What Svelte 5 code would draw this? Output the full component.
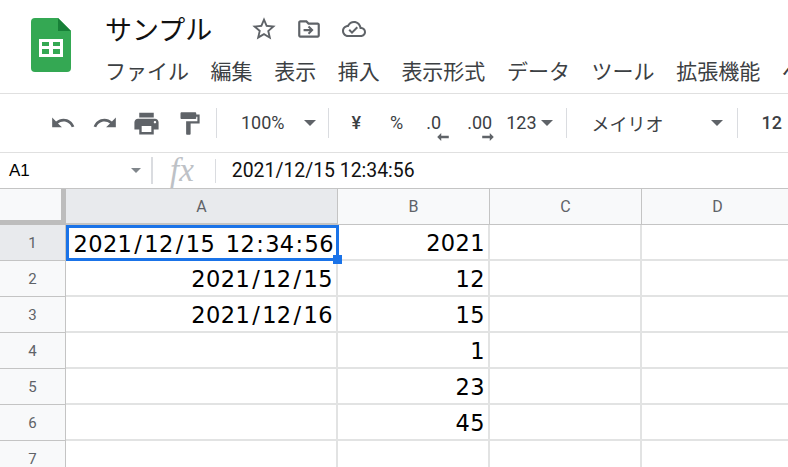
<script>
  const menus = ['ファイル', '編集', '表示', '挿入', '表示形式', 'データ', 'ツール', '拡張機能', 'ヘルプ'];
  const columns = ['A', 'B', 'C', 'D'];
  const rows = [
    { a: '2021/12/15 12:34:56', b: '2021' },
    { a: '2021/12/15', b: '12' },
    { a: '2021/12/16', b: '15' },
    { a: '', b: '1' },
    { a: '', b: '23' },
    { a: '', b: '45' },
    { a: '', b: '' }
  ];
</script>

<div class="page">
  <header class="top">
    <svg class="logo" width="40" height="54" viewBox="0 0 40 54">
      <path d="M4 0h23l13 13v37a4 4 0 0 1-4 4H4a4 4 0 0 1-4-4V4a4 4 0 0 1 4-4z" fill="#34a853" />
      <path d="M27 0l13 13H27z" fill="#188038" />
      <path d="M8 21h24v18H8zM11 24v4h7v-4zM22 24v4h7v-4zM11 31v5h7v-5zM22 31v5h7v-5z" fill="#fff" fill-rule="evenodd" />
    </svg>
    <div class="titles">
      <div class="title-row">
        <span class="doc-name">サンプル</span>
        <div class="doc-icons">
          <svg width="28" height="28" viewBox="0 0 24 24"><path d="M22 9.24l-7.19-.62L12 2 9.19 8.63 2 9.24l5.46 4.73L5.82 21 12 17.27 18.18 21l-1.63-7.03L22 9.24zM12 15.4l-3.76 2.27 1-4.28-3.32-2.88 4.38-.38L12 6.1l1.71 4.04 4.38.38-3.32 2.88 1 4.28L12 15.4z" /></svg>
          <svg width="26" height="26" viewBox="0 0 24 24"><path d="M20 6h-8l-2-2H4c-1.1 0-2 .9-2 2v12c0 1.1.9 2 2 2h16c1.100 0 2-.9 2-2V8c0-1.100-.9-2-2-2zm0 12H4V6h5.170l2 2H20v10z" /><path d="M12.200 9l-1.300 1.300 1.700 1.700H7v2h5.600l-1.700 1.700L12.200 17l4-4z" /></svg>
          <svg class="cloud" width="24" height="24" viewBox="0 0 24 24"><path d="M19.35 10.04C18.67 6.59 15.64 4 12 4 9.11 4 6.6 5.64 5.35 8.04 2.34 8.36 0 10.91 0 14c0 3.31 2.69 6 6 6h13c2.76 0 5-2.24 5-5 0-2.64-2.05-4.78-4.65-4.96zM19 18H6c-2.21 0-4-1.79-4-4 0-2.05 1.53-3.76 3.56-3.97l1.07-.11.5-.95C8.08 7.14 9.94 6 12 6c2.62 0 4.88 1.86 5.39 4.43l.3 1.5 1.53.11c1.56.1 2.78 1.41 2.78 2.96 0 1.65-1.35 3-3 3zm-9-3.82l-2.09-2.09L6.5 13.5 10 17l6.01-6.01-1.41-1.41z" /></svg>
        </div>
      </div>
      <nav class="menu">
        {#each menus as m}
          <span>{m}</span>
        {/each}
      </nav>
    </div>
  </header>

  <div class="toolbar">
    <svg class="ic undo" width="26" height="26" viewBox="0 0 24 24"><path d="M12.5 8c-2.65 0-5.05.99-6.9 2.6L2 7v9h9l-3.62-3.62c1.39-1.16 3.16-1.88 5.12-1.88 3.54 0 6.55 2.31 7.6 5.5l2.37-.78C21.08 11.03 17.15 8 12.5 8z" /></svg>
    <svg class="ic redo" width="26" height="26" viewBox="0 0 24 24"><path d="M18.4 10.6C16.55 8.99 14.15 8 11.5 8c-4.65 0-8.58 3.03-9.96 7.22L3.9 16c1.05-3.19 4.05-5.5 7.6-5.5 1.95 0 3.73.72 5.12 1.88L13 16h9V7l-3.6 3.6z" /></svg>
    <svg class="ic print" width="29" height="29" viewBox="0 0 24 24"><path d="M19 8H5c-1.66 0-3 1.34-3 3v6h4v4h12v-4h4v-6c0-1.66-1.34-3-3-3zm-3 11H8v-5h8v5zm3-7c-.55 0-1-.45-1-1s.45-1 1-1 1 .45 1 1-.45 1-1 1zm-1-9H6v4h12V3z" /></svg>
    <svg class="ic paint" width="27" height="27" viewBox="0 0 24 24"><path d="M18 4V3c0-.55-.45-1-1-1H5c-.55 0-1 .45-1 1v4c0 .55.45 1 1 1h12c.55 0 1-.45 1-1V6h1v4H9v11c0 .55.45 1 1 1h2c.55 0 1-.45 1-1v-9h8V4h-3z" /></svg>
    <i class="sep s1"></i>
    <span class="tool zoom-val">100%</span>
    <i class="caret c1"></i>
    <i class="sep s2"></i>
    <span class="tool yen">¥</span>
    <span class="tool pct">%</span>
    <span class="tool dec dec1">.0<svg width="12" height="8" viewBox="0 0 13 9"><path d="M4.500 0L0 4.500 4.500 9V6H13V3H4.500z" /></svg></span>
    <span class="tool dec dec2">.00<svg width="12" height="8" viewBox="0 0 13 9"><path d="M8.500 0L13 4.500 8.500 9V6H0V3h8.500z" /></svg></span>
    <span class="tool fmt">123</span>
    <i class="caret c2"></i>
    <i class="sep s3"></i>
    <span class="font-name">メイリオ</span>
    <i class="caret c3"></i>
    <i class="sep s4"></i>
    <span class="tool size">12</span>
  </div>

  <div class="formula">
    <span class="cell-name">A1</span>
    <i class="caret small"></i>
    <i class="fsep"></i>
    <span class="fx">fx</span>
    <i class="fsep two"></i>
    <span class="fvalue">2021/12/15 12:34:56</span>
  </div>

  <div class="sheet">
    <div class="corner"></div>
    {#each columns as c, i}
      <div class="colhead" class:active={i === 0}>{c}</div>
    {/each}
    {#each rows as r, i}
      <div class="rowhead" class:active={i === 0}>{i + 1}</div>
      <div class="cell" class:selected={i === 0}>
        <span>{#each r.a.split(/([\/:])/) as part}{#if part === '/' || part === ':'}<span class={part === '/' ? 'slash' : 'colon'}>{part}</span>{:else}{part}{/if}{/each}</span>
        {#if i === 0}<b class="handle"></b>{/if}
      </div>
      <div class="cell">{r.b}</div>
      <div class="cell"></div>
      <div class="cell"></div>
    {/each}
  </div>
</div>

<style>
  :global(body) {
    margin: 0;
    background: #fff;
  }

  .page {
    width: 788px;
    height: 467px;
    overflow: hidden;
    display: flex;
    flex-direction: column;
    color: #000;
    font-family: Roboto, sans-serif;
  }

  /* title + menu */
  .top {
    flex: 0 0 94px;
    box-sizing: border-box;
    display: flex;
    padding: 18px 0 0 31px;
    border-bottom: 1px solid #e0e0e0;
  }

  .logo {
    flex: none;
  }

  .titles {
    margin-left: 34px;
    margin-top: -4px;
    white-space: nowrap;
  }

  .title-row {
    display: flex;
    align-items: center;
    height: 30px;
  }

  .doc-name {
    font-family: 'Noto Sans CJK JP', sans-serif;
    font-size: 27px;
    line-height: 30px;
    color: #111;
  }

  .doc-icons {
    display: flex;
    align-items: center;
    gap: 18px;
    margin-left: 38px;
  }

  .doc-icons svg {
    fill: #5f6368;
  }

  .cloud { margin-left: 2px; }

  .menu {
    display: flex;
    gap: 21.600px;
    margin-top: 11px;
    font-family: 'Noto Sans CJK JP', sans-serif;
    font-size: 21px;
    line-height: 30px;
    color: #3c4043;
  }

  /* toolbar */
  .toolbar {
    flex: 0 0 58px;
    border-bottom: 1px solid #e0e0e0;
    display: flex;
    align-items: center;
    padding-left: 50px;
    white-space: nowrap;
  }

  .ic {
    fill: #5f6368;
    flex: none;
  }

  .redo { margin-left: 16px; }
  .print { margin-left: 14px; }
  .paint { margin-left: 15px; }

  .sep {
    width: 1px;
    height: 30px;
    background: #dadce0;
    flex: none;
  }

  .s1 { margin-left: 13px; }
  .s2 { margin-left: 12px; }
  .s3 { margin-left: 13px; }
  .s4 { margin-left: 14px; }

  .tool {
    font-size: 18px;
    color: #3c4043;
    margin-bottom: 2px;
  }

  .zoom-val { margin-left: 24px; }
  .c1 { margin-left: 19px; }
  .yen { margin-left: 23px; font-weight: 500; }
  .pct { margin-left: 29px; }

  .dec {
    position: relative;
  }

  .dec svg {
    position: absolute;
    fill: #5f6368;
    top: 21px;
  }

  .dec1 { margin-left: 23px; }
  .dec1 svg { left: 11px; }
  .dec2 { margin-left: 26px; }
  .dec2 svg { left: 15px; }

  .fmt { margin-left: 14px; }
  .c2 { margin-left: 4px; }

  .font-name {
    font-family: 'Noto Sans CJK JP', sans-serif;
    font-size: 18px;
    margin-left: 25px;
    color: #3c4043;
  }

  .c3 { margin-left: 47px; }
  .size { margin-left: 24px; font-weight: 500; }

  .caret {
    width: 0;
    height: 0;
    flex: none;
    border-left: 6px solid transparent;
    border-right: 6px solid transparent;
    border-top: 6px solid #5f6368;
  }

  /* formula bar */
  .formula {
    flex: 0 0 35px;
    display: flex;
    align-items: center;
    padding-left: 9px;
    white-space: nowrap;
    border-bottom: 1px solid #c4c4c4;
  }

  .cell-name {
    width: 122px;
    font-family: 'Liberation Sans', sans-serif;
    font-size: 17px;
  }

  .caret.small {
    border-left-width: 5px;
    border-right-width: 5px;
    border-top-width: 5px;
    border-top-color: #80868b;
  }

  .fsep {
    width: 2px;
    height: 27px;
    margin-left: 10px;
    background: #dadce0;
    flex: none;
  }

  .fsep.two {
    width: 1px;
    height: 24px;
    margin-left: 21px;
  }

  .fx {
    margin-left: 17px;
    margin-bottom: 2px;
    font-family: 'Liberation Serif', serif;
    font-style: italic;
    font-size: 33px;
    line-height: 30px;
    color: #bdc1c6;
  }

  .fvalue {
    margin-left: 16px;
    font-size: 19.400px;
    color: #111;
  }

  /* grid */
  .sheet {
    flex: 1;
    display: grid;
    grid-template-columns: 66px 272px 152px 152px 152px;
    grid-template-rows: 36px repeat(7, 36px);
  }

  .corner {
    background: #f8f9fa;
    border-right: 5px solid #bdbdbd;
    border-bottom: 5px solid #bdbdbd;
  }

  .colhead {
    background: #f8f9fa;
    border-right: 1px solid #c4c4c4;
    border-bottom: 1px solid #c4c4c4;
    display: flex;
    align-items: center;
    justify-content: center;
    font-size: 16px;
    color: #5f6368;
  }

  .colhead.active {
    background: #e8eaed;
    border-bottom-width: 2px;
  }

  .rowhead {
    background: #f8f9fa;
    border-right: 1px solid #c4c4c4;
    border-bottom: 1px solid #c4c4c4;
    display: flex;
    align-items: center;
    justify-content: center;
    font-size: 15px;
    color: #5f6368;
    padding-top: 1px;
    box-sizing: border-box;
  }

  .rowhead.active {
    background: #e8eaed;
  }

  .cell {
    position: relative;
    box-sizing: border-box;
    border-right: 2px solid #e2e3e3;
    border-bottom: 2px solid #e2e3e3;
    display: flex;
    align-items: center;
    justify-content: flex-end;
    padding: 1px 3px 0 0;
    font-family: 'DejaVu Sans', sans-serif;
    font-size: 22.500px;
    letter-spacing: 0.4px;
    word-spacing: 3px;
    white-space: nowrap;
    color: #000;
  }

  .slash {
    padding: 0 2px;
  }

  .colon {
    padding: 0 1px;
  }

  .cell.selected {
    border: 3px solid #1a73e8;
    padding-right: 2px;
    margin-right: -1px;
    z-index: 1;
  }

  .handle {
    position: absolute;
    right: -6px;
    bottom: -6px;
    width: 9px;
    height: 9px;
    background: #1a73e8;
  }
</style>
